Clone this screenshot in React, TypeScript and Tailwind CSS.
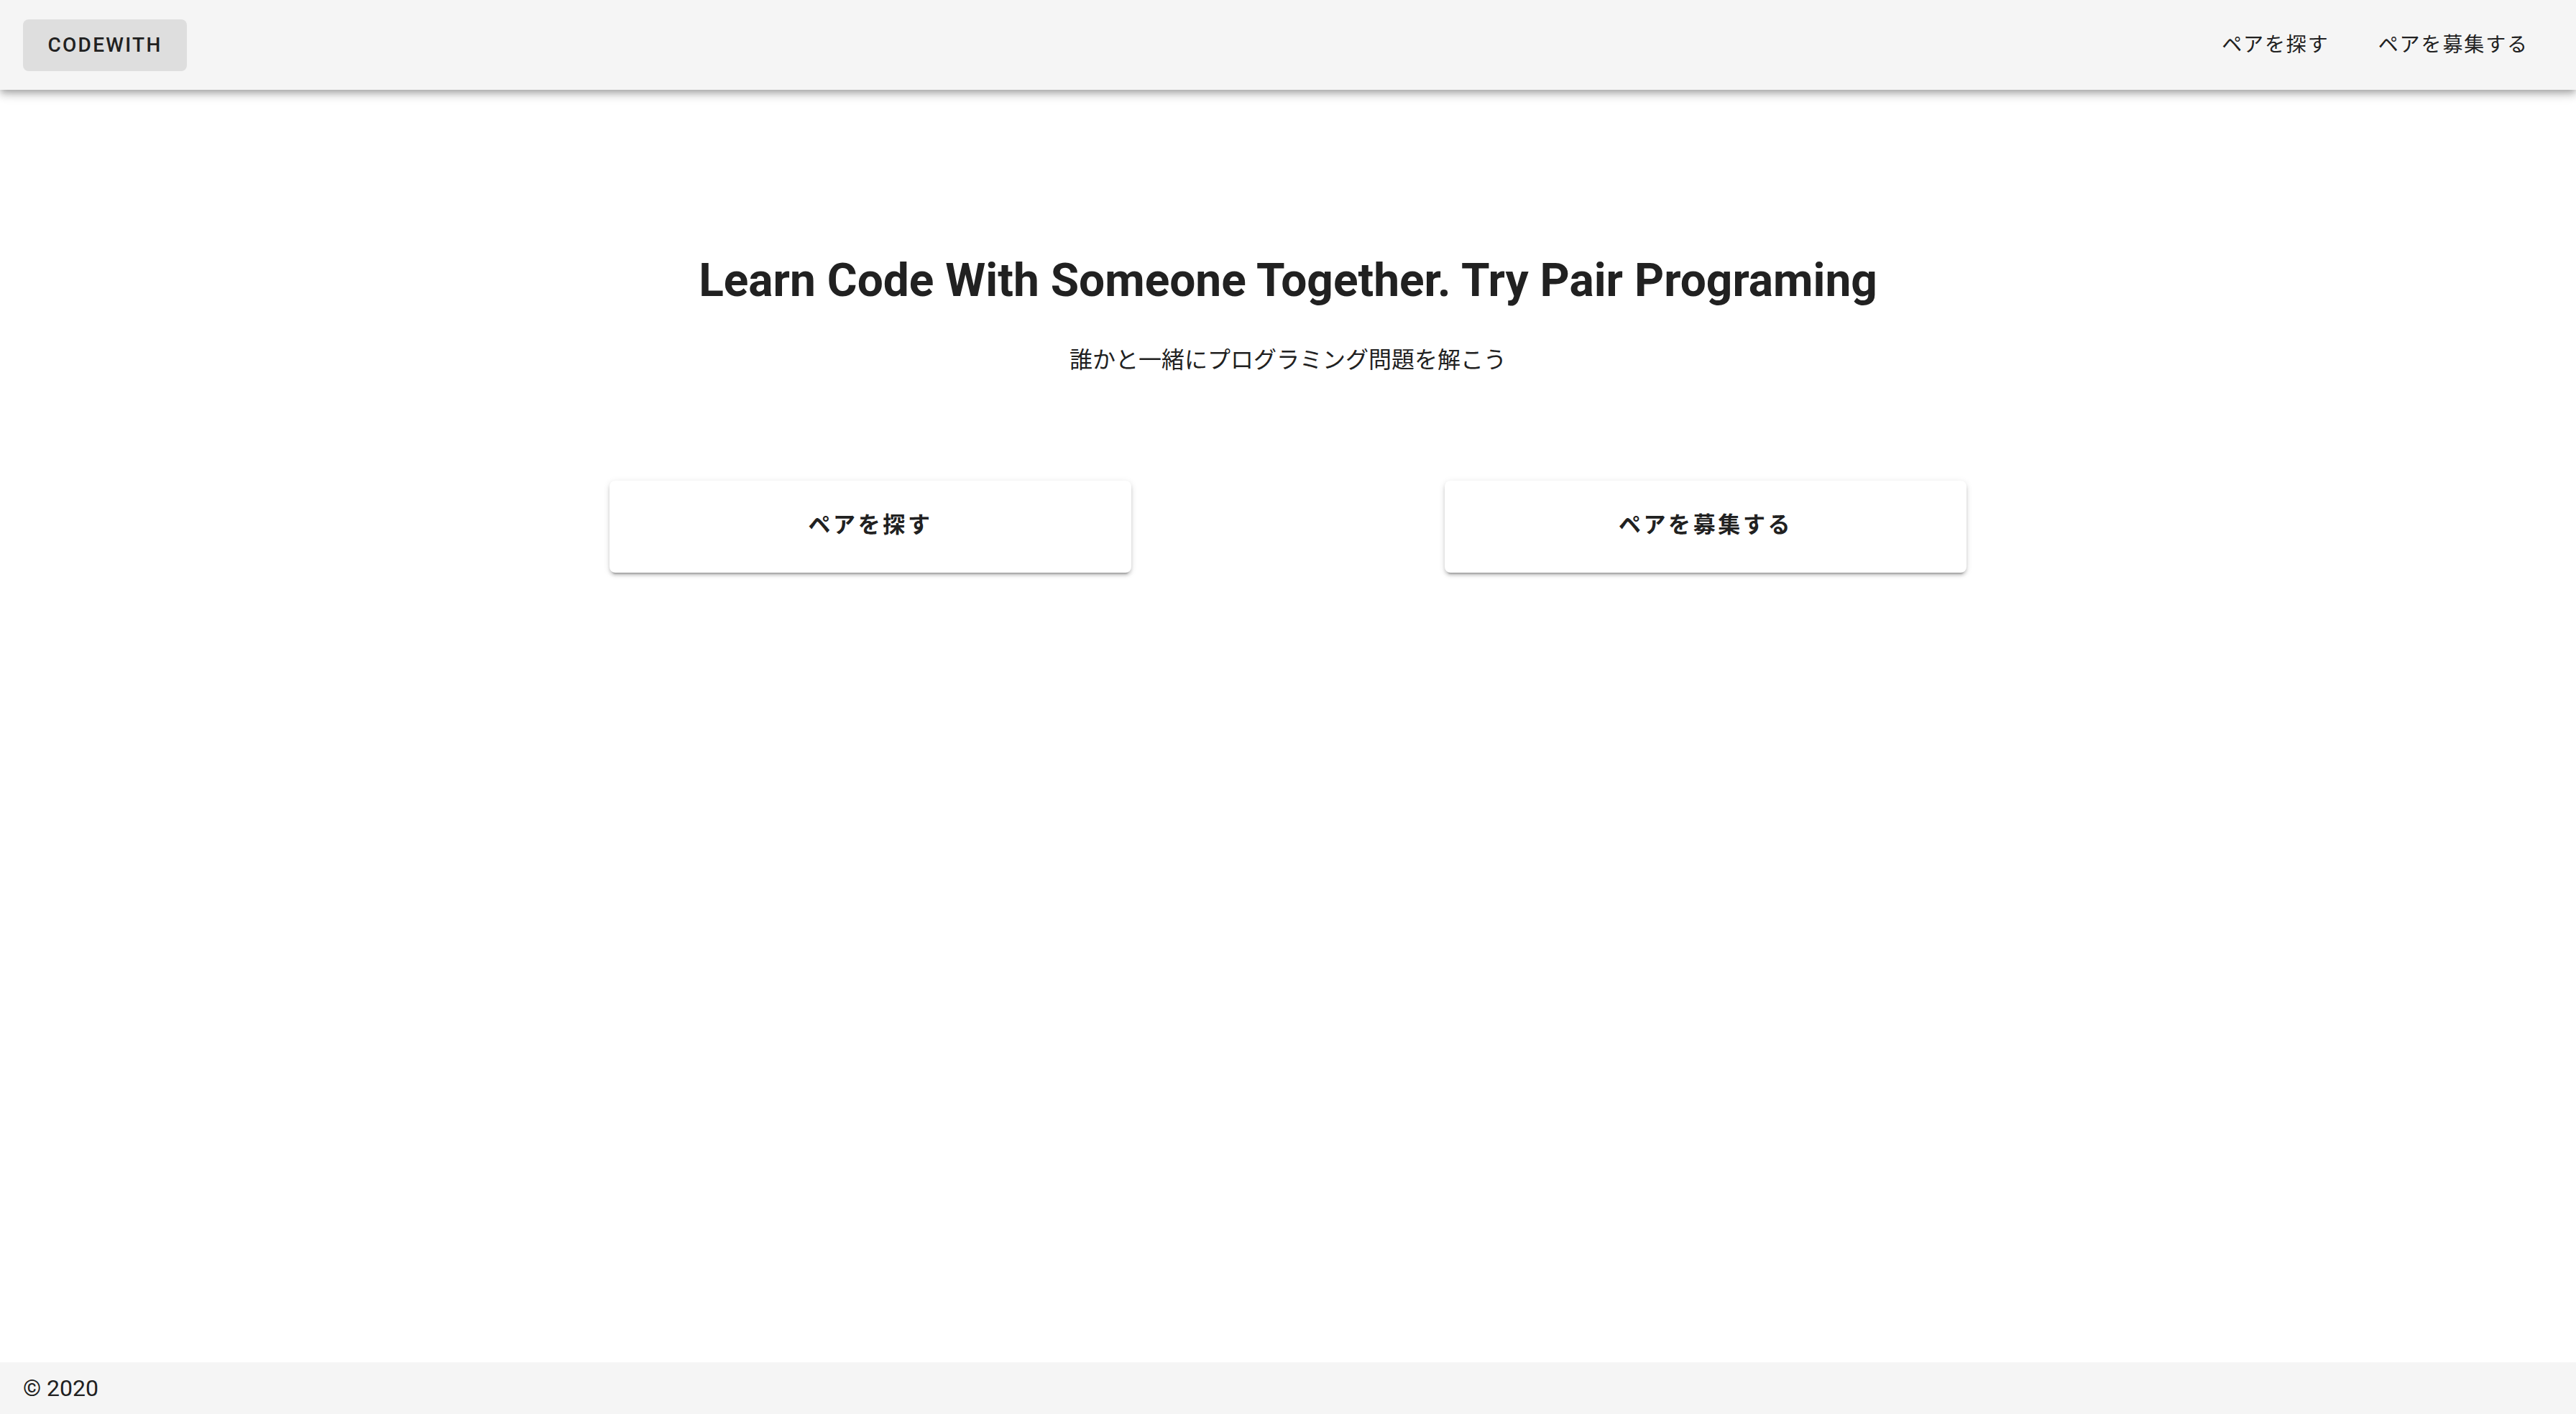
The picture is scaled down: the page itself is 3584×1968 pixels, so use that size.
const font = { fontFamily: 'Roboto, "Noto Sans CJK JP", sans-serif' };

const NavButton = ({ label }: { label: string }) => (
  <button className="h-[72px] px-4 rounded-lg text-[28px] font-normal tracking-[1.9px] text-[#212121]">
    {label}
  </button>
);

const ActionCard = ({ label }: { label: string }) => (
  <button className="w-[726px] h-[128px] bg-white rounded-lg flex items-center justify-center pb-1 text-[31px] font-bold tracking-[3.6px] text-[#212121] shadow-[0_6px_2px_-4px_rgba(0,0,0,0.2),0_4px_4px_0_rgba(0,0,0,0.14),0_2px_10px_0_rgba(0,0,0,0.12)]">
    {label}
  </button>
);

export default function App() {
  return (
    <div className="min-h-screen flex flex-col bg-white text-[#212121]" style={font}>
      <header className="h-[125px] bg-[#f5f5f5] flex items-center justify-between pl-8 pr-[50px] relative z-10 shadow-[0_4px_8px_-2px_rgba(0,0,0,0.2),0_8px_10px_0_rgba(0,0,0,0.14),0_2px_20px_0_rgba(0,0,0,0.12)]">
        <button className="h-[72px] w-[228px] rounded-lg bg-[#dedede] text-[28px] font-medium tracking-[2.3px] text-[#212121]">
          CODEWITH
        </button>
        <nav className="flex items-center gap-[36px]">
          <NavButton label="ペアを探す" />
          <NavButton label="ペアを募集する" />
        </nav>
      </header>

      <main className="flex-1 flex flex-col items-center pt-[227px]">
        <h1 className="text-[64px] leading-[77px] font-bold text-[#212121]">
          Learn Code With Someone Together. Try Pair Programing
        </h1>
        <p className="mt-[48px] text-[32px] leading-[48px] tracking-normal text-[#212121]">
          誰かと一緒にプログラミング問題を解こう
        </p>
        <div className="mt-[144px] flex justify-center gap-[436px]">
          <ActionCard label="ペアを探す" />
          <ActionCard label="ペアを募集する" />
        </div>
      </main>

      <footer className="h-[72px] bg-[#f5f5f5] flex items-center px-8">
        <span className="text-[32px] text-[#212121]">© 2020</span>
      </footer>
    </div>
  );
}
